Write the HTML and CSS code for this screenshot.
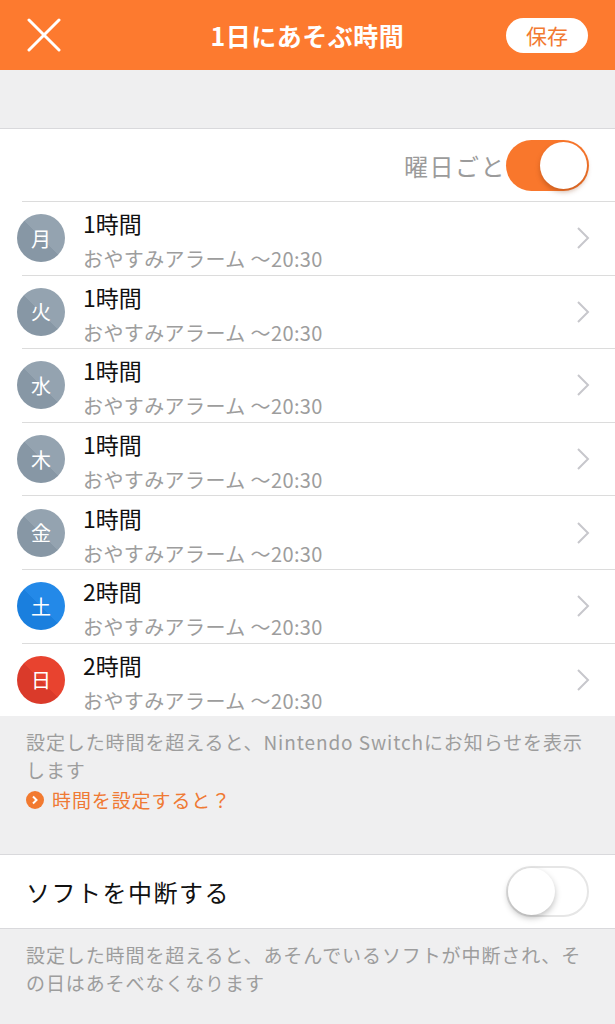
FILE: index.html
```html
<!DOCTYPE html>
<html lang="ja">
<head>
  <meta charset="UTF-8" />
  <meta name="viewport" content="width=device-width, initial-scale=1.0"/>
  <title>1日にあそぶ時間</title>
  <link rel="stylesheet" href="styles.css">
</head>
<body>

  <!-- Header -->
  <header class="nav">
    <button class="nav-close" aria-label="閉じる">
      <svg width="34" height="34" viewBox="0 0 34 34"><path d="M2 2 L32 32 M32 2 L2 32" stroke="#fff" stroke-width="3" stroke-linecap="round" fill="none"/></svg>
    </button>
    <h1 class="nav-title">1日にあそぶ時間</h1>
    <button class="nav-save">保存</button>
  </header>

  <div class="spacer"></div>

  <!-- Per-day list -->
  <section class="group">
    <div class="toggle-row">
      <span class="toggle-label">曜日ごと</span>
      <span class="switch on"><span class="knob"></span></span>
    </div>
    <div id="dayList"></div>
  </section>

  <div class="note">
    <p>設定した時間を超えると、Nintendo Switchにお知らせを表示します</p>
    <a class="note-link" href="#">
      <span class="link-dot">
        <svg width="8" height="10" viewBox="0 0 8 10"><path d="M2 1.5 L5.5 5 L2 8.5" stroke="#fff" stroke-width="2" fill="none"/></svg>
      </span>時間を設定すると？</a>
  </div>

  <section class="group group-single">
    <div class="single-row">
      <span class="single-label">ソフトを中断する</span>
      <span class="switch"><span class="knob"></span></span>
    </div>
  </section>

  <div class="note note-last">
    <p>設定した時間を超えると、あそんでいるソフトが中断され、その日はあそべなくなります</p>
  </div>

  <script>
    const days = [
      { d: "月", hours: 1, kind: "weekday" },
      { d: "火", hours: 1, kind: "weekday" },
      { d: "水", hours: 1, kind: "weekday" },
      { d: "木", hours: 1, kind: "weekday" },
      { d: "金", hours: 1, kind: "weekday" },
      { d: "土", hours: 2, kind: "sat" },
      { d: "日", hours: 2, kind: "sun" }
    ];
    const list = document.getElementById("dayList");
    days.forEach((day) => {
      const row = document.createElement("div");
      row.className = "day-row";
      row.innerHTML = `
        <span class="day-badge ${day.kind}">${day.d}</span>
        <div class="day-text">
          <div class="day-time">${day.hours}時間</div>
          <div class="day-sub">おやすみアラーム 〜20:30</div>
        </div>
        <svg class="chevron" width="14" height="24" viewBox="0 0 14 24"><path d="M2 2 L12 12 L2 22" stroke="#c7c7cc" stroke-width="2" fill="none"/></svg>
      `;
      list.appendChild(row);
    });
  </script>
</body>
</html>
```

FILE: styles.css
```css
html, body {
  margin: 0;
  padding: 0;
  background: #efeff0;
  font-family: "Noto Sans CJK JP", "Noto Sans", sans-serif;
  width: 615px;
  overflow: hidden;
}

/* Header */
.nav {
  height: 70px;
  background: #fd7a2f;
  display: flex;
  align-items: center;
  justify-content: space-between;
  padding: 0 27px 0 27px;
  box-sizing: border-box;
}

.nav-close {
  background: none;
  border: none;
  padding: 0;
  width: 34px;
  height: 34px;
  margin-top: -1px;
}

.nav-title {
  margin: 0 0 0 48px;
  color: white;
  font-size: 25px;
  font-weight: 700;
  letter-spacing: 0.5px;
}

.nav-save {
  width: 82px;
  height: 35px;
  border: none;
  border-radius: 18px;
  background: white;
  color: #f27a32;
  font-family: inherit;
  font-size: 21px;
  padding: 0;
  line-height: 35px;
}

.spacer {
  height: 58px;
  border-bottom: 1px solid #d9d9dc;
}

/* Groups */
.group {
  background: white;
}

.toggle-row {
  height: 72px;
  display: flex;
  align-items: center;
  justify-content: flex-end;
  padding-right: 26px;
}

.toggle-label {
  color: #9b9b9b;
  font-size: 24px;
  letter-spacing: 1.5px;
}

.switch {
  width: 83px;
  height: 51px;
  border-radius: 26px;
  box-sizing: border-box;
  border: 2px solid #e6e6e6;
  background: white;
  position: relative;
  flex: none;
}

.switch .knob {
  position: absolute;
  top: 0;
  left: 0;
  width: 47px;
  height: 47px;
  border-radius: 50%;
  background: white;
  box-shadow: 0 3px 6px rgba(0, 0, 0, 0.25);
}

.switch.on {
  background: #f9772c;
  border: none;
}

.switch.on .knob {
  top: 2px;
  left: 34px;
  box-shadow: 0 3px 5px rgba(120, 50, 10, 0.35);
}

.day-row {
  height: 73.6px;
  box-sizing: border-box;
  display: flex;
  align-items: center;
  margin-left: 22px;
  padding-right: 25px;
  border-top: 1px solid #dcdcdc;
}

.day-badge {
  width: 48px;
  height: 48px;
  border-radius: 50%;
  margin-left: -5px;
  display: flex;
  align-items: center;
  justify-content: center;
  color: white;
  font-size: 20px;
  flex: none;
}

.day-badge.weekday {
  background: linear-gradient(45deg, #8797a5 50%, #94a3b0 50%);
}

.day-badge.sat {
  background: linear-gradient(45deg, #1a7fde 50%, #2389e8 50%);
}

.day-badge.sun {
  background: linear-gradient(45deg, #da3a2a 50%, #e8432f 50%);
}

.day-text {
  flex: 1;
  margin-left: 18px;
  padding-top: 5px;
}

.day-time {
  font-size: 23px;
  color: #111;
  line-height: 30px;
}

.day-sub {
  margin-top: 7px;
  font-size: 20px;
  letter-spacing: 0.4px;
  color: #9d9d9d;
  line-height: 28px;
}

.chevron {
  flex: none;
}

/* Notes */
.note {
  padding: 12px 26px 40px;
  border-bottom: 1px solid #d9d9dc;
}

.note p {
  margin: 0;
  font-size: 19px;
  letter-spacing: 0.9px;
  line-height: 28px;
  color: #9d9d9d;
}

.note-link {
  display: flex;
  align-items: center;
  margin-top: 2px;
  color: #ef7a34;
  font-size: 19px;
  letter-spacing: 0.9px;
  line-height: 28px;
  text-decoration: none;
}

.link-dot {
  width: 18px;
  height: 18px;
  border-radius: 50%;
  background: #f27a30;
  display: flex;
  align-items: center;
  justify-content: center;
  margin-right: 8px;
}

.single-row {
  height: 73px;
  display: flex;
  align-items: center;
  justify-content: space-between;
  padding: 0 26px;
}

.single-label {
  font-size: 24px;
  color: #111;
  letter-spacing: 1.5px;
}

.note-last {
  border-bottom: none;
  padding-top: 12px;
  border-top: 1px solid #d9d9dc;
}
```
